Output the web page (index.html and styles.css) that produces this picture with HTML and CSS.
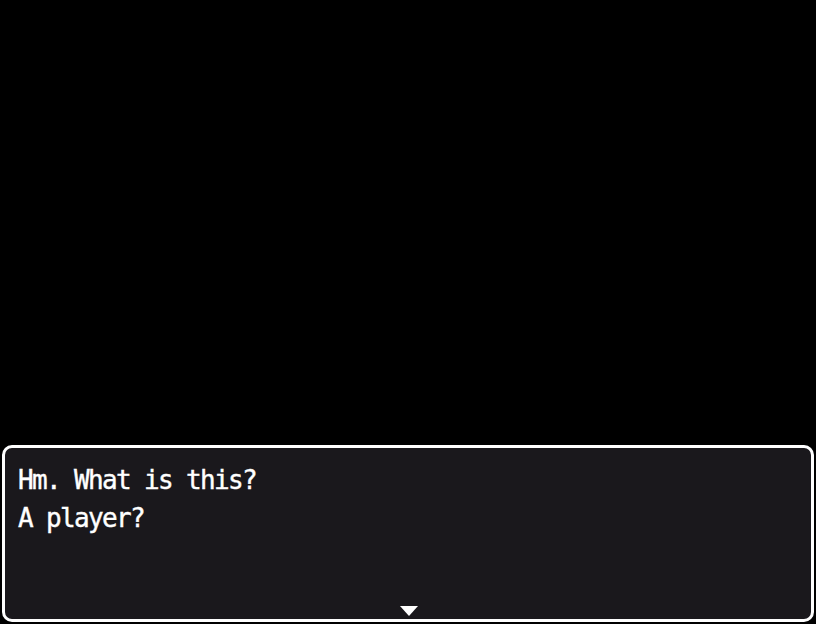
FILE: index.html
```html
<!DOCTYPE html>
<html>
<head>
<meta charset="utf-8">
<link rel="stylesheet" href="styles.css">
</head>
<body>
<div class="screen">
  <div class="message-box">
    <p class="line">Hm. What is this?</p>
    <p class="line">A player?</p>
    <svg class="pause-arrow" width="18" height="10" viewBox="0 0 18 10"><polygon points="0,0 18,0 9,10" fill="#ffffff"/></svg>
  </div>
</div>
</body>
</html>
```
FILE: styles.css
```css
html, body {
  margin: 0;
  padding: 0;
  background: #000;
}
.screen {
  width: 816px;
  height: 624px;
  display: flex;
  flex-direction: column;
  justify-content: flex-end;
  padding: 0 2px 2px 2px;
  box-sizing: border-box;
}
.message-box {
  position: relative;
  height: 177px;
  box-sizing: border-box;
  border: 3px solid #ffffff;
  border-radius: 10px;
  background: #1a181c;
  padding: 13px 13px;
  font-family: "DejaVu Sans Mono", monospace;
  font-size: 26px;
  letter-spacing: -1.65px;
  color: #ffffff;
  -webkit-text-stroke: 0.4px #ffffff;
}
.line {
  margin: 0;
  line-height: 38px;
}
.pause-arrow {
  position: absolute;
  left: 395px;
  bottom: 3px;
}
```
